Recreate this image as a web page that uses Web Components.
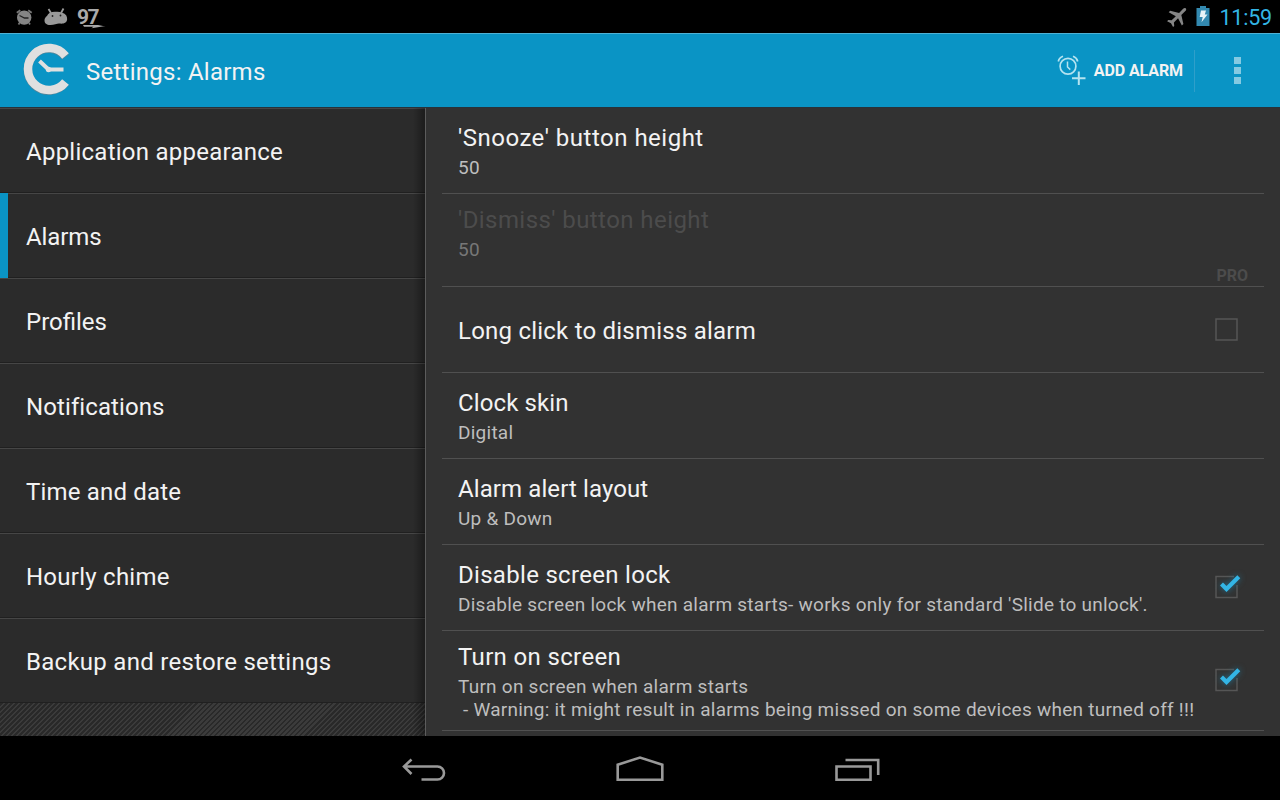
<!DOCTYPE html>
<html lang="en">
<head>
<meta charset="utf-8">
<title>Settings: Alarms</title>
<style>
  body {
    margin: 0;
    background: #000;
    font-family: Roboto, "Liberation Sans", sans-serif;
    overflow: hidden;
  }
</style>
</head>
<body>
<settings-screen></settings-screen>

<script>
class StatusBar extends HTMLElement {
  constructor() {
    super();
    this.attachShadow({ mode: 'open' });
  }

  connectedCallback() {
    this.shadowRoot.innerHTML = `
      <style>
        :host {
          display: flex;
          justify-content: space-between;
          height: 33px;
          background: #000;
        }
        div { display: flex; align-items: flex-start; }
        svg { display: block; }
        .clock {
          color: #33b5e5;
          font-size: 21.5px;
          line-height: 26px;
          letter-spacing: -0.2px;
          padding: 5px 8px 0 8px;
        }
        .level {
          color: #aaa;
          font-size: 21px;
          font-weight: 700;
          line-height: 24px;
          letter-spacing: -1.6px;
          padding: 5px 0 0 6px;
          width: 24px;
        }
        .bolt { margin-left: -24px; }
      </style>
      <div>
        <svg width="71" height="33" viewBox="0 0 71 33">
          <path d="M16.8 12.8l3.500-2.600M28.200 10.200l3.500 2.600M19.500 23l-1 1.500M29 23l1 1.500" fill="none" stroke="#777" stroke-width="1.800"/>
          <circle cx="24.200" cy="17.600" r="7.200" fill="#858585"/>
          <path d="M19.500 15.500l5 2.500h4" fill="none" stroke="#222" stroke-width="1.300"/>
          <path d="M44.500 20.500c0-2 1-3.500 2.500-4.500C48 13 51.500 11.500 56 11.800c4-.3 8 .8 10.300 3.700 1.200 2.500 1.300 5.500-.8 7-2 1.400-4.500 1.200-6.500 1-2 .3-5 1.500-8.500 1.500-3.500.2-6-1.500-6-4.500z" fill="#999"/>
          <path d="M51 13l-2.500-4M61 13l2.500-4.500" stroke="#999" stroke-width="1.800"/>
          <circle cx="52.500" cy="16" r=".9" fill="#222"/><circle cx="60.500" cy="15.500" r=".9" fill="#222"/>
        </svg>
        <span class="level">97</span>
        <svg class="bolt" width="32" height="33" viewBox="0 0 32 33">
          <path d="M6 25h20l-5 1h7.500l-14 2.200 2-1.400H7z" fill="#aaa"/>
        </svg>
      </div>
      <div>
        <svg width="45" height="33" viewBox="1166 0 45 33">
          <path transform="translate(1177.500 16.700) rotate(45) scale(.98)" fill="#858585"
            d="M0-12c1 0 1.600 1 1.600 2.300v5.800L9.500 1v2.200L1.600.8v6L4.300 9v1.700L0 9.400l-4.300 1.300V9l2.700-2.200v-6l-7.900 2.400V1l7.900-4.900v-5.800C-1.600-11-1-12 0-12z"/>
          <path d="M1200 6h6v2h3.500v18H1196.500V8h3.500z" fill="#3389b0"/>
          <path d="M1201 10.500h5l-1.200 4h2.700l-6 7.800 1.200-5.300h-3z" fill="#e8f3f7"/>
        </svg>
        <span class="clock">11:59</span>
      </div>
    `;
  }
}

class ActionBar extends HTMLElement {
  constructor() {
    super();
    this.attachShadow({ mode: 'open' });
  }

  connectedCallback() {
    this.shadowRoot.innerHTML = `
      <style>
        :host {
          display: flex;
          align-items: center;
          box-sizing: border-box;
          height: 75px;
          background: #0a94c5;
          border-top: 1px solid #4fb2d5;
          border-bottom: 1px solid #28323a;
        }
        svg { display: block; flex: none; }
        h1 {
          flex: 1;
          margin: 0 0 0 10px;
          color: #f3f3f3;
          font-size: 24px;
          font-weight: 400;
          line-height: 30px;
          letter-spacing: 0.25px;
          padding-top: 2px;
        }
        .action {
          display: flex;
          align-items: center;
          height: 42px;
          padding-right: 11px;
          border-right: 1px solid #2f9fca;
          color: #f3f3f3;
          font-size: 16px;
          font-weight: 700;
          letter-spacing: -0.1px;
          gap: 8px;
        }
      </style>
      <svg width="76" height="73" viewBox="0 34 76 73">
        <path d="M65.500 57A21 21 0 1 0 65.500 82.500" fill="none" stroke="#4f879c" stroke-width="8.500"/>
        <path d="M65.500 56A21 21 0 1 0 65.500 82" fill="none" stroke="#e0e0e0" stroke-width="8.500"/>
        <path d="M39.500 61l9 8.500H63.500" fill="none" stroke="#e0e0e0" stroke-width="4"/>
        <circle cx="48.500" cy="69.500" r="2.700" fill="#e0e0e0"/>
      </svg>
      <h1><slot></slot></h1>
      <div class="action">
        <svg width="29" height="34" viewBox="1057 54 29 34">
          <g fill="none" stroke="#b5e3f0">
            <circle cx="1068" cy="66.300" r="7.900" stroke-width="1.700"/>
            <path d="M1067.500 61.500v5.500l2.800 2.600" stroke-width="1.500"/>
            <path d="M1058.300 61.500c.5-2.300 2-4.200 4.700-5.200M1073 56.300c2.700 1 4.200 2.900 4.700 5.200" stroke-width="1.700"/>
            <path d="M1078.800 71.500v13.500M1072 78.200h13.500" stroke-width="2"/>
          </g>
        </svg>
        <span>ADD ALARM</span>
      </div>
      <svg width="85" height="73" viewBox="1195 34 85 73">
        <path d="M1234 57h7v7h-7zM1234 67h7v7h-7zM1234 77h7v7h-7z" fill="#85cae2"/>
      </svg>
    `;
  }
}

class HeaderItem extends HTMLElement {
  constructor() {
    super();
    this.attachShadow({ mode: 'open' });
  }

  connectedCallback() {
    this.shadowRoot.innerHTML = `
      <style>
        :host {
          display: flex;
          align-items: center;
          box-sizing: border-box;
          height: 85px;
          background: #2b2b2b;
          border-top: 1px solid #464646;
          border-bottom: 1px solid #202020;
          color: #f3f3f3;
          font-size: 24px;
          line-height: 30px;
          letter-spacing: var(--track, 0.25px);
          padding: 3px 0 0 26px;
        }
        /* the marker covers the hairlines at the left edge */
        :host([selected]) {
          background:
            linear-gradient(#0a94c5, #0a94c5) 0 0 / 8px 100% no-repeat border-box,
            linear-gradient(#464646, #464646) 0 0 / 100% 1px no-repeat border-box,
            linear-gradient(#202020, #202020) 0 100% / 100% 1px no-repeat border-box,
            #2b2b2b;
          border-color: transparent;
        }
      </style>
      <span><slot></slot></span>
    `;
  }
}

class PrefCheckbox extends HTMLElement {
  constructor() {
    super();
    this.attachShadow({ mode: 'open' });
  }

  connectedCallback() {
    const tick = this.hasAttribute('checked')
      ? '<path class="tick" d="M11.500 18l5 5L28.800 10.800" fill="none" stroke="#33b5e5" stroke-width="4.200"/>'
      : '';
    const box = tick ? 'M24 10.500H6v21h21V19' : 'M6 11h21v21h-21z';
    this.shadowRoot.innerHTML = `
      <style>
        :host { display: block; flex: none; }
        svg { display: block; }
        .tick { filter: drop-shadow(0 0 3px rgba(30, 130, 170, 0.75)); }
      </style>
      <svg width="40" height="44" viewBox="0 0 40 44">
        <path d="${box}" fill="none" stroke="#565656" stroke-width="1.500"/>
        ${tick}
      </svg>
    `;
  }
}

class PrefItem extends HTMLElement {
  constructor() {
    super();
    this.attachShadow({ mode: 'open' });
  }

  connectedCallback() {
    this.shadowRoot.innerHTML = `
      <style>
        :host {
          display: flex;
          align-items: center;
          box-sizing: border-box;
          height: var(--row-height, 86px);
          border-bottom: 1px solid #505050;
          padding: 0 14px 0 16px;
        }
        .text { flex: 1; align-self: flex-start; padding-top: var(--text-top, 15px); }
        .title {
          color: #f3f3f3;
          font-size: 24px;
          line-height: 30px;
          letter-spacing: var(--track, 0.25px);
        }
        ::slotted(p) {
          margin: 3px 0 0;
          color: #bebebe;
          font-size: 19px;
          line-height: 23px;
          letter-spacing: 0.25px;
          white-space: pre;
        }
        :host([disabled]) .title { color: #4c4c4c; }
        :host([disabled]) ::slotted(p) { color: #777; }
        ::slotted(b) {
          align-self: flex-end;
          color: #4c4c4c;
          font-size: 16px;
          line-height: 20px;
          margin-right: 2px;
        }
      </style>
      <div class="text">
        <div class="title">${this.getAttribute('heading')}</div>
        <slot></slot>
      </div>
      <slot name="widget"></slot>
    `;
  }
}

class NavBar extends HTMLElement {
  constructor() {
    super();
    this.attachShadow({ mode: 'open' });
  }

  connectedCallback() {
    this.shadowRoot.innerHTML = `
      <style>
        :host {
          display: flex;
          justify-content: center;
          align-items: center;
          gap: 153px;
          height: 64px;
          background: #000;
        }
        svg { display: block; fill: none; stroke: #999; stroke-width: 2.6; }
      </style>
      <svg width="64" height="64" viewBox="391 736 64 64">
        <path d="M421.500 779.500h16a6.500 6.500 0 0 0 0-13H404.500M411.500 759.500l-7.500 7 7.500 7.500"/>
      </svg>
      <svg width="64" height="64" viewBox="608 736 64 64">
        <path d="M617.700 779.800v-15.100L640 757.500l22.300 7.200v15.100z"/>
      </svg>
      <svg width="64" height="64" viewBox="825 736 64 64">
        <path d="M836.500 766.500h34v13.300h-34zM845.500 760h32.700v15"/>
      </svg>
    `;
  }
}

class SettingsScreen extends HTMLElement {
  constructor() {
    super();
    this.attachShadow({ mode: 'open' });
  }

  connectedCallback() {
    this.shadowRoot.innerHTML = `
      <style>
        :host {
          display: flex;
          flex-direction: column;
          width: 1280px;
          height: 800px;
        }
        main { flex: 1; min-height: 0; display: flex; overflow: hidden; }
        aside {
          position: relative;
          width: 425px;
          background: repeating-linear-gradient(135deg, #292929 0 2px, #3b3b3b 2px 3.54px);
        }
        /* shadow cast by the detail pane */
        aside::after {
          content: '';
          position: absolute;
          top: 0;
          right: 0;
          width: 12px;
          height: 100%;
          background: linear-gradient(90deg, transparent, rgba(0, 0, 0, 0.35));
        }
        section {
          flex: 1;
          background: #323232;
          border-left: 1px solid #5c5c5c;
          padding: 0 16px;
        }
      </style>
      <status-bar></status-bar>
      <action-bar>Settings: Alarms</action-bar>
      <main>
        <aside>
          <header-item>Application appearance</header-item>
          <header-item selected style="--track: -0.1px">Alarms</header-item>
          <header-item style="--track: 0">Profiles</header-item>
          <header-item style="--track: 0.1px">Notifications</header-item>
          <header-item style="--track: 0.18px">Time and date</header-item>
          <header-item>Hourly chime</header-item>
          <header-item style="--track: 0.28px">Backup and restore settings</header-item>
        </aside>
        <section>
          <pref-item heading="'Snooze' button height" style="--track: 0.5px"><p>50</p></pref-item>
          <pref-item heading="'Dismiss' button height" disabled style="--row-height: 93px; --text-top: 11px; --track: 0.43px">
            <p>50</p>
            <b slot="widget">PRO</b>
          </pref-item>
          <pref-item heading="Long click to dismiss alarm" style="--text-top: 29px; --track: 0.22px">
            <pref-checkbox slot="widget"></pref-checkbox>
          </pref-item>
          <pref-item heading="Clock skin" style="--track: 0.12px"><p>Digital</p></pref-item>
          <pref-item heading="Alarm alert layout" style="--track: 0.1px"><p>Up &amp; Down</p></pref-item>
          <pref-item heading="Disable screen lock" style="--track: 0.3px">
            <p>Disable screen lock when alarm starts- works only for standard 'Slide to unlock'.</p>
            <pref-checkbox slot="widget" checked></pref-checkbox>
          </pref-item>
          <pref-item heading="Turn on screen" style="--row-height: 100px; --text-top: 11px; --track: 0.35px">
            <p>Turn on screen when alarm starts
 - Warning: it might result in alarms being missed on some devices when turned off !!!</p>
            <pref-checkbox slot="widget" checked></pref-checkbox>
          </pref-item>
        </section>
      </main>
      <nav-bar></nav-bar>
    `;
  }
}

customElements.define('status-bar', StatusBar);
customElements.define('action-bar', ActionBar);
customElements.define('header-item', HeaderItem);
customElements.define('pref-checkbox', PrefCheckbox);
customElements.define('pref-item', PrefItem);
customElements.define('nav-bar', NavBar);
customElements.define('settings-screen', SettingsScreen);
</script>
</body>
</html>
